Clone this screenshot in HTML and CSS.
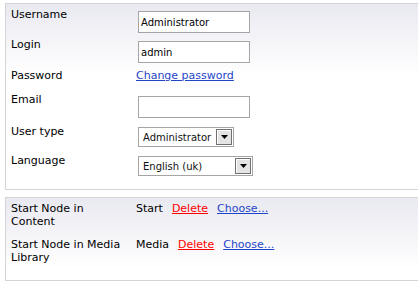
FILE: index.html
```html
<!DOCTYPE html>
<html lang="en">
<head>
    <meta charset="UTF-8">
    <meta name="viewport" content="width=device-width, initial-scale=1.0">
    <title>Edit user</title>
    <link rel="stylesheet" href="styles.css">
</head>
<body>
    <!-- User details -->
    <div class="panel">
        <div class="row">
            <label class="label" for="username">Username</label>
            <div class="value"><input class="text" type="text" id="username" value="Administrator"></div>
        </div>
        <div class="row">
            <label class="label" for="login">Login</label>
            <div class="value"><input class="text" type="text" id="login" value="admin"></div>
        </div>
        <div class="row row-link">
            <span class="label">Password</span>
            <div class="value"><a href="#" class="link">Change password</a></div>
        </div>
        <div class="row">
            <label class="label" for="email">Email</label>
            <div class="value"><input class="text" type="text" id="email" value=""></div>
        </div>
        <div class="row row-select">
            <span class="label">User type</span>
            <div class="value">
                <div class="select select-type">
                    <span class="select-text">Administrator</span>
                    <span class="select-btn"><svg width="7" height="4" viewBox="0 0 7 4"><path d="M0 0h7L3.5 4z" fill="#000"/></svg></span>
                </div>
            </div>
        </div>
        <div class="row row-select">
            <span class="label">Language</span>
            <div class="value">
                <div class="select select-lang">
                    <span class="select-text">English (uk)</span>
                    <span class="select-btn"><svg width="7" height="4" viewBox="0 0 7 4"><path d="M0 0h7L3.5 4z" fill="#000"/></svg></span>
                </div>
            </div>
        </div>
    </div>

    <!-- Start nodes -->
    <div class="panel panel-nodes">
        <div class="row row-node">
            <span class="label">Start Node in Content</span>
            <div class="value">
                <span class="node">Start</span>
                <a href="#" class="delete">Delete</a>
                <a href="#" class="link">Choose...</a>
            </div>
        </div>
        <div class="row row-node">
            <span class="label">Start Node in Media Library</span>
            <div class="value">
                <span class="node">Media</span>
                <a href="#" class="delete">Delete</a>
                <a href="#" class="link">Choose...</a>
            </div>
        </div>
    </div>
</body>
</html>
```

FILE: styles.css
```css
html, body {
    overflow: hidden;
}

body {
    margin: 0;
    padding: 3px 0 0 5px;
    font-family: "DejaVu Sans", Verdana, sans-serif;
    font-size: 11px;
    line-height: 13px;
    color: #000;
    background: #fff;
}

/* Boxes with the light gradient */
.panel {
    width: 440px;
    border: 1px solid #d4d4d4;
    background: linear-gradient(#e9e9f1, #fff 70px);
    padding: 4px 5px 13px 5px;
}

.panel-nodes {
    margin-top: 7px;
    padding-bottom: 16px;
}

.row {
    display: flex;
    align-items: flex-start;
    margin-bottom: 5px;
}

.row:last-child {
    margin-bottom: 0;
}

.row-link {
    min-height: 19px;
    padding-top: 1px;
}

.row-select {
    padding-top: 2px;
}

.row-node {
    margin-bottom: 10px;
}

.label {
    width: 115px;
    padding-right: 10px;
    flex-shrink: 0;
}

.value {
    display: flex;
    align-items: flex-start;
}

/* Form controls */
.text {
    box-sizing: border-box;
    width: 112px;
    height: 22px;
    margin: 3px 0 0 2px;
    padding: 1px 2px 0;
    border: 1px solid #a5a5a5;
    background: #fff;
    font-family: inherit;
    font-size: 10px;
    color: #000;
    outline: none;
}

.select {
    box-sizing: border-box;
    display: flex;
    align-items: center;
    height: 20px;
    margin: 2px 0 0 2px;
    border: 1px solid #a5a5a5;
    background: #fff;
    font-size: 10px;
}

.select-type {
    width: 96px;
}

.select-lang {
    width: 115px;
}

.select-text {
    flex: 1;
    padding-left: 4px;
    overflow: hidden;
    white-space: nowrap;
    color: #111;
}

.select-btn {
    box-sizing: border-box;
    display: flex;
    align-items: center;
    justify-content: center;
    width: 16px;
    height: 16px;
    margin-right: 1px;
    border: 1px solid #707070;
    background: #e4e4e4;
    box-shadow: inset 1px 1px 0 #fff;
}

.link {
    color: #1e45c8;
}

.delete {
    color: #ff0000;
    margin-left: 9px;
}

.delete + .link {
    margin-left: 9px;
}
```
